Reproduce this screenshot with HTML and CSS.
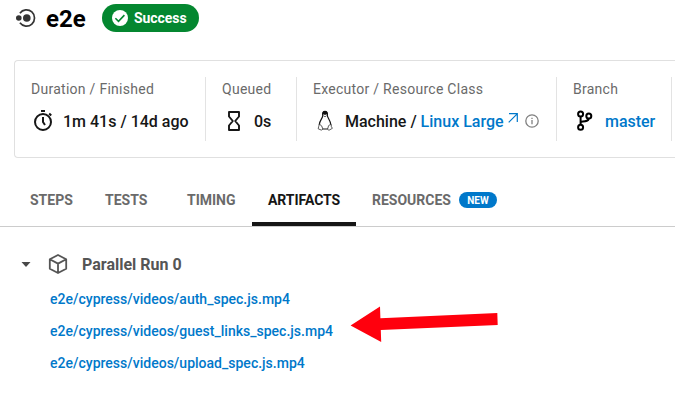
FILE: index.html
```html
<!DOCTYPE html>
<html lang="en">
<head>
<meta charset="utf-8">
<title>e2e</title>
<link rel="stylesheet" href="styles.css">
</head>
<body>
<header class="job-header">
  <svg class="job-icon" width="20" height="18" viewBox="0 0 20 18"><path d="M3.9 4.2A8.1 8.1 0 1 1 3.9 13.8" fill="none" stroke="#343434" stroke-width="1.7"/><circle cx="2.8" cy="9" r="2.8" fill="#343434"/><circle cx="10.8" cy="9" r="3.8" fill="#343434"/></svg>
  <h1 class="job-name">e2e</h1>
  <span class="status">
    <svg width="16" height="16" viewBox="0 0 16 16"><circle cx="8" cy="8" r="8" fill="#fff"/><path d="M3.4 8.3l3.1 3L12.4 5.1" fill="none" stroke="#048730" stroke-width="1.6"/></svg>
    <span class="status-text">Success</span>
  </span>
</header>

<section class="summary">
  <div class="cell cell-duration">
    <div class="label">Duration / Finished</div>
    <div class="value">
      <svg class="icon" width="24" height="24" viewBox="0 0 24 24" fill="none" stroke="#161616" stroke-width="2"><circle cx="12" cy="13" r="8"/><path d="M10 2h4M12 8v5l2 3M18.200 4.500l2 2"/></svg>
      <span class="value-text duration">1m 41s / 14d ago</span>
    </div>
  </div>
  <div class="cell cell-queued">
    <div class="label">Queued</div>
    <div class="value">
      <svg class="icon" width="24" height="24" viewBox="0 0 24 24" fill="none" stroke="#161616" stroke-width="1.900" stroke-linejoin="round"><path d="M7 3h10v4.500l-3.800 4.500l3.800 4.500v4.500h-10v-4.500l3.800-4.500L7 7.500z"/></svg>
      <span class="value-text">0s</span>
    </div>
  </div>
  <div class="cell cell-executor">
    <div class="label">Executor / Resource Class</div>
    <div class="value">
      <svg class="icon" width="24" height="24" viewBox="0 0 24 24"><path d="M9.700 7C9.500 3.700 10.300 2.500 12 2.500s2.600 1.300 2.400 4.300c.1 2 3.300 5 3.500 9.200L15.100 20H9.400L6.300 15.500c.2-3.800 3.300-6.300 3.400-8.500z" fill="#fff" stroke="#161616" stroke-width="1.200"/><path d="M9.200 6C9 3 10 1.700 12 1.700s3 1.300 2.800 4.300l-1.300-.8-1.500.8-1.500-.8z" fill="#111"/><path d="M10.400 6.700l1.600 1.100 1.600-1.100" fill="none" stroke="#444" stroke-width=".8"/><path d="M6.400 15.200l2.200 1.600 1.200 3.100-1.200 1.300-3.400-1.400.4-2zM17.900 15.200l-2.300 1.400-1 3.500 1.300 1.200 3.500-2-1-1.500z" fill="#fff" stroke="#333" stroke-width=".8" stroke-linejoin="round"/></svg>
      <span class="value-text executor">Machine / <a class="link">Linux Large</a></span>
      <svg class="external" width="10" height="10" viewBox="0 0 10 10" fill="none" stroke="#0078ca" stroke-width="1.200"><path d="M1 .7h8.300V9M9.200.8L.7 9.300"/></svg>
      <svg class="info" width="14" height="14" viewBox="0 0 14 14" fill="none" stroke="#808080" stroke-width="1.300"><circle cx="7" cy="7" r="6.200"/><path d="M7 6v4.300M7 3.700v1.300"/></svg>
    </div>
  </div>
  <div class="cell cell-branch">
    <div class="label">Branch</div>
    <div class="value">
      <svg class="icon" width="24" height="24" viewBox="0 0 24 24" fill="none" stroke="#000" stroke-width="2"><circle cx="7.600" cy="5" r="2.500"/><circle cx="7.600" cy="18.200" r="2.500"/><circle cx="15.800" cy="7" r="2.500"/><path d="M7.600 7.500v8.200M15.800 9.500c-.6 3-3.500 2.700-8.200 3.300"/></svg>
      <a class="value-text link">master</a>
    </div>
  </div>
</section>

<nav class="tabs">
  <a class="tab tab-steps">STEPS</a>
  <a class="tab tab-tests">TESTS</a>
  <a class="tab tab-timing">TIMING</a>
  <a class="tab tab-artifacts active">ARTIFACTS</a>
  <a class="tab tab-resources">RESOURCES <span class="badge">NEW</span></a>
</nav>

<main class="artifacts">
  <div class="run">
    <svg class="caret" width="10" height="5" viewBox="0 0 10 5"><path d="M.5 0h9L5 5z" fill="#494949"/></svg>
    <svg class="cube" width="20" height="20" viewBox="0 0 20 20" fill="none" stroke="#555" stroke-width="1.800" stroke-linejoin="round"><path d="M10 1l8.200 4.300v9.400L10 19l-8.200-4.300V5.300zM1.800 5.300L10 9.600l8.200-4.300M10 9.600V19"/></svg>
    <h2 class="run-name">Parallel Run 0</h2>
  </div>
  <ul class="files">
    <li><a class="file">e2e/cypress/videos/auth_spec.js.mp4</a></li>
    <li><a class="file">e2e/cypress/videos/guest_links_spec.js.mp4</a></li>
    <li><a class="file">e2e/cypress/videos/upload_spec.js.mp4</a></li>
  </ul>
  <svg class="arrow" width="148" height="37" viewBox="0 0 148 37"><path d="M.6 19.500L30 .5l.4 11.700L147.300 7l.4 12L30.800 24l.4 12z" fill="#ff000d"/></svg>
</main>
</body>
</html>
```

FILE: styles.css
```css
* { box-sizing: border-box; }
body {
  margin: 0;
  background: #fff;
  color: #161616;
  font-family: Roboto, "Liberation Sans", sans-serif;
}
svg { display: block; flex: none; }
h1, h2, ul { margin: 0; padding: 0; }

.job-header {
  display: flex;
  align-items: center;
  height: 36px;
  padding-left: 16px;
}
.job-name {
  width: 56px;
  padding: 2px 0 0 10px;
  font-size: 24px;
  line-height: 28px;
  font-weight: 700;
  color: #000;
}
.status {
  display: flex;
  align-items: center;
  gap: 6px;
  width: 97px;
  height: 28px;
  margin-left: 10px;
  padding-left: 10px;
  border-radius: 14px;
  background: #048730;
  color: #fff;
}
.status-text { font-size: 14px; font-weight: 700; letter-spacing: -.07px; }

.summary {
  display: flex;
  height: 98px;
  margin: 24px 0 0 14px;
  padding: 16px 0;
  border: 1px solid #e0e0e0;
  border-right: 0;
  border-radius: 4px 0 0 4px;
}
.cell {
  flex: none;
  height: 64px;
  padding-left: 16px;
  border-right: 1px solid #e3e3e3;
  white-space: nowrap;
}
.cell-duration { width: 191px; }
.cell-queued { width: 91px; }
.cell-executor { width: 260px; }
.cell-branch { width: 115px; }
.label {
  height: 24px;
  font-size: 14px;
  line-height: 24px;
  letter-spacing: .27px;
  color: #6a6a6a;
}
.value {
  display: flex;
  align-items: center;
  height: 24px;
  margin-top: 8px;
}
.value-text {
  margin-left: 8px;
  padding-top: 2px;
  font-size: 16px;
  line-height: 24px;
  font-weight: 500;
}
.cell-branch .value-text { letter-spacing: -.05px; }
.link { color: #0078ca; }
.external { margin: -7px 0 0 4px; }
.info { margin-left: 7px; }

.tabs {
  display: flex;
  height: 53px;
  margin-top: 16px;
  padding-left: 14px;
  border-bottom: 1px solid #ccc;
  font-size: 14px;
  font-weight: 700;
  line-height: 16px;
  color: #6a6a6a;
}
.tab {
  display: flex;
  height: 52px;
  padding: 18px 16px 0;
}
.tab-steps { width: 75px; }
.tab-tests { width: 82px; }
.tab-timing { width: 81px; }
.tab-artifacts { width: 104px; letter-spacing: -.05px; }
.active { color: #161616; border-bottom: 4px solid #161616; }
.badge {
  width: 38px;
  height: 16px;
  margin-left: 8px;
  border-radius: 8px;
  background: #0078ca;
  color: #fff;
  font-size: 10px;
  line-height: 17px;
  text-align: center;
}

.artifacts { position: relative; padding-top: 25px; }
.run {
  display: flex;
  align-items: center;
  height: 24px;
  padding-left: 21px;
}
.cube { margin-left: 17px; }
.run-name {
  margin-left: 14px;
  padding-top: 2px;
  font-size: 16px;
  line-height: 24px;
  font-weight: 700;
  color: #555;
}
.files {
  padding: 7px 0 0 50px;
  list-style: none;
}
.files li { height: 32px; line-height: 32px; }
.file {
  font-size: 14px;
  font-weight: 500;
  letter-spacing: .01px;
  color: #0078ca;
}
.arrow { position: absolute; left: 350px; top: 79px; }
```
